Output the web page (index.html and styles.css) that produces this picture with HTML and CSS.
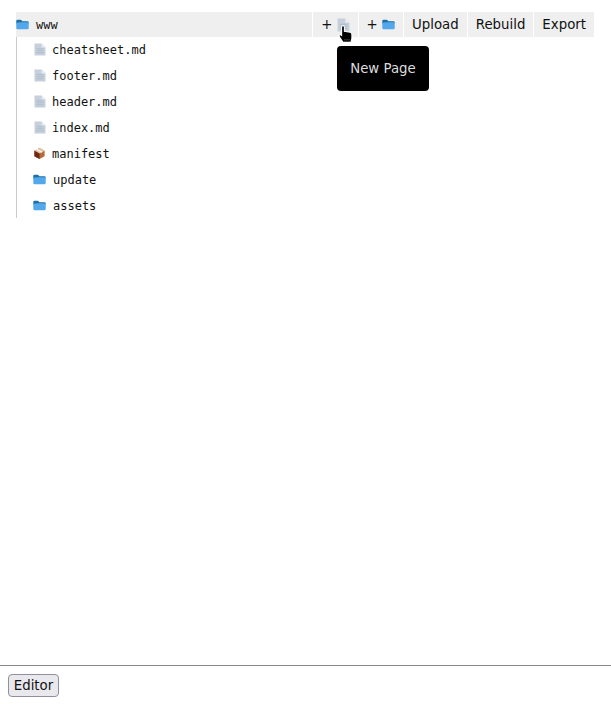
FILE: index.html
```html
<!DOCTYPE html>
<html lang="en">
<head>
<meta charset="utf-8">
<title>Files</title>
<link rel="stylesheet" href="styles.css">
</head>
<body>
<svg class="defs" width="0" height="0" aria-hidden="true">
  <defs>
    <symbol id="folder" viewBox="0 0 14 12">
      <path d="M0.3 2.2Q0.3 0.8 1.7 0.8H4.8Q5.6 0.8 6 1.4L6.8 2.4H12.2Q13.7 2.4 13.7 3.9V5H0.3Z" fill="#1d6fa5"/>
      <path d="M0.3 4.2Q3 3.4 6 3.6H13.7V9.8Q13.7 11.2 12.3 11.2H1.7Q0.3 11.2 0.3 9.8Z" fill="#52a8ea"/>
    </symbol>
    <symbol id="file" viewBox="0 0 12 13">
      <path d="M0.5 0.5H7.6L11.5 4.4V12.5H0.5Z" fill="#c5d0dc"/>
      <path d="M7.6 0.5V4.4H11.5Z" fill="#e6ebf0"/>
      <path d="M2.5 5.8H9.5M2.5 7.8H9.5M2.5 9.8H9.5" stroke="#aebbc8" stroke-width="1"/>
    </symbol>
  </defs>
</svg>
<div class="page">
  <main class="tree">
    <div class="head">
      <div class="root">
        <svg class="icon root-icon"><use href="#folder"/></svg>
        <span class="name">www</span>
      </div>
      <div class="actions">
        <button class="act act-icon">+ <svg class="icon file-icon"><use href="#file"/></svg></button>
        <button class="act act-icon">+ <svg class="icon"><use href="#folder"/></svg></button>
        <button class="act">Upload</button>
        <button class="act">Rebuild</button>
        <button class="act">Export</button>
      </div>
      <div class="tip">New Page</div>
      <svg class="cursor" viewBox="0 0 15 18" width="15" height="18" aria-hidden="true">
        <path d="M3.6 2Q3.6 0.6 5 0.6Q6.4 0.6 6.4 2V6.2L12.2 7.2Q13.9 7.6 13.9 9.2V13.4L12.9 17.4H5L1.2 11.6Q0.6 9.6 2.4 9.6L3.6 10.4Z" fill="#000" stroke="#fff" stroke-width="1.1"/>
        <path d="M6.5 14.5H12M6.5 16H12" stroke="#777" stroke-width="0.7" stroke-dasharray="1 1"/>
      </svg>
    </div>
    <ul class="list">
      <li class="row"><svg class="icon file-row"><use href="#file"/></svg><span class="name">cheatsheet.md</span></li>
      <li class="row"><svg class="icon file-row"><use href="#file"/></svg><span class="name">footer.md</span></li>
      <li class="row"><svg class="icon file-row"><use href="#file"/></svg><span class="name">header.md</span></li>
      <li class="row"><svg class="icon file-row"><use href="#file"/></svg><span class="name">index.md</span></li>
      <li class="row">
        <svg class="icon" viewBox="0 0 14 14">
          <path d="M7 1L12.5 4V10L7 13L1.5 10V4Z" fill="#b8693c"/>
          <path d="M7 1L12.5 4L7 7L1.5 4Z" fill="#e8c4a8"/>
          <path d="M1.5 4L7 7V13L1.5 10Z" fill="#6b2a14"/>
          <path d="M4 2.5L9.8 5.6" stroke="#fff" stroke-width="1.2"/>
        </svg>
        <span class="name">manifest</span>
      </li>
      <li class="row"><svg class="icon"><use href="#folder"/></svg><span class="name folder-name">update</span></li>
      <li class="row"><svg class="icon"><use href="#folder"/></svg><span class="name folder-name">assets</span></li>
    </ul>
  </main>
  <footer class="foot">
    <button class="editor">Editor</button>
  </footer>
</div>
</body>
</html>
```
FILE: styles.css
```css
* { box-sizing: border-box; }
html, body { margin: 0; height: 100%; background: #fff; }
.defs { position: absolute; }
.page {
  height: 704px;
  display: flex;
  flex-direction: column;
  font-family: "DejaVu Sans", sans-serif;
  color: #111;
}
.tree { flex: 1; padding: 12px 17px 0 16px; }
.head {
  position: relative;
  height: 25px;
  display: flex;
  justify-content: space-between;
  background: #efefef;
}
.root { display: flex; align-items: center; }
.icon { width: 13px; height: 13px; flex: none; }
.file-icon { height: 14px; }
.file-row { width: 12px; margin-left: 1px; }
.root-icon { margin-right: 7px; }
.name { font: 12px/1 "DejaVu Sans Mono", monospace; color: #111; }
.actions { display: flex; gap: 1px; background: #fff; padding-left: 1px; }
.act {
  border: 0;
  margin: 0;
  padding: 0 8px;
  background: #efefef;
  font: 13.333px "DejaVu Sans", sans-serif;
  color: #111;
  display: flex;
  align-items: center;
}
.act-icon { white-space: pre; }
.tip {
  position: absolute;
  left: 321px;
  top: 34px;
  width: 92px;
  height: 45px;
  background: #000;
  color: #ddd;
  border-radius: 4px;
  font-size: 13.333px;
  display: flex;
  align-items: center;
  justify-content: center;
}
.cursor { position: absolute; left: 322px; top: 13px; }
.list {
  list-style: none;
  margin: 0;
  padding: 0 0 0 16px;
  border-left: 1px solid #ccc;
  height: 181px;
}
.row { height: 26px; display: flex; align-items: center; gap: 6px; }
.row .icon { margin-top: -1px; }
.folder-name { margin-left: 1px; }
.foot {
  height: 39px;
  border-top: 1px solid #888;
  padding: 8px;
}
.editor {
  height: 23px;
  width: 51px;
  padding: 0;
  border: 1px solid #8f8f9d;
  border-radius: 4px;
  background: #e9e9ed;
  font: 13.333px "DejaVu Sans", sans-serif;
  color: #111;
}
```
